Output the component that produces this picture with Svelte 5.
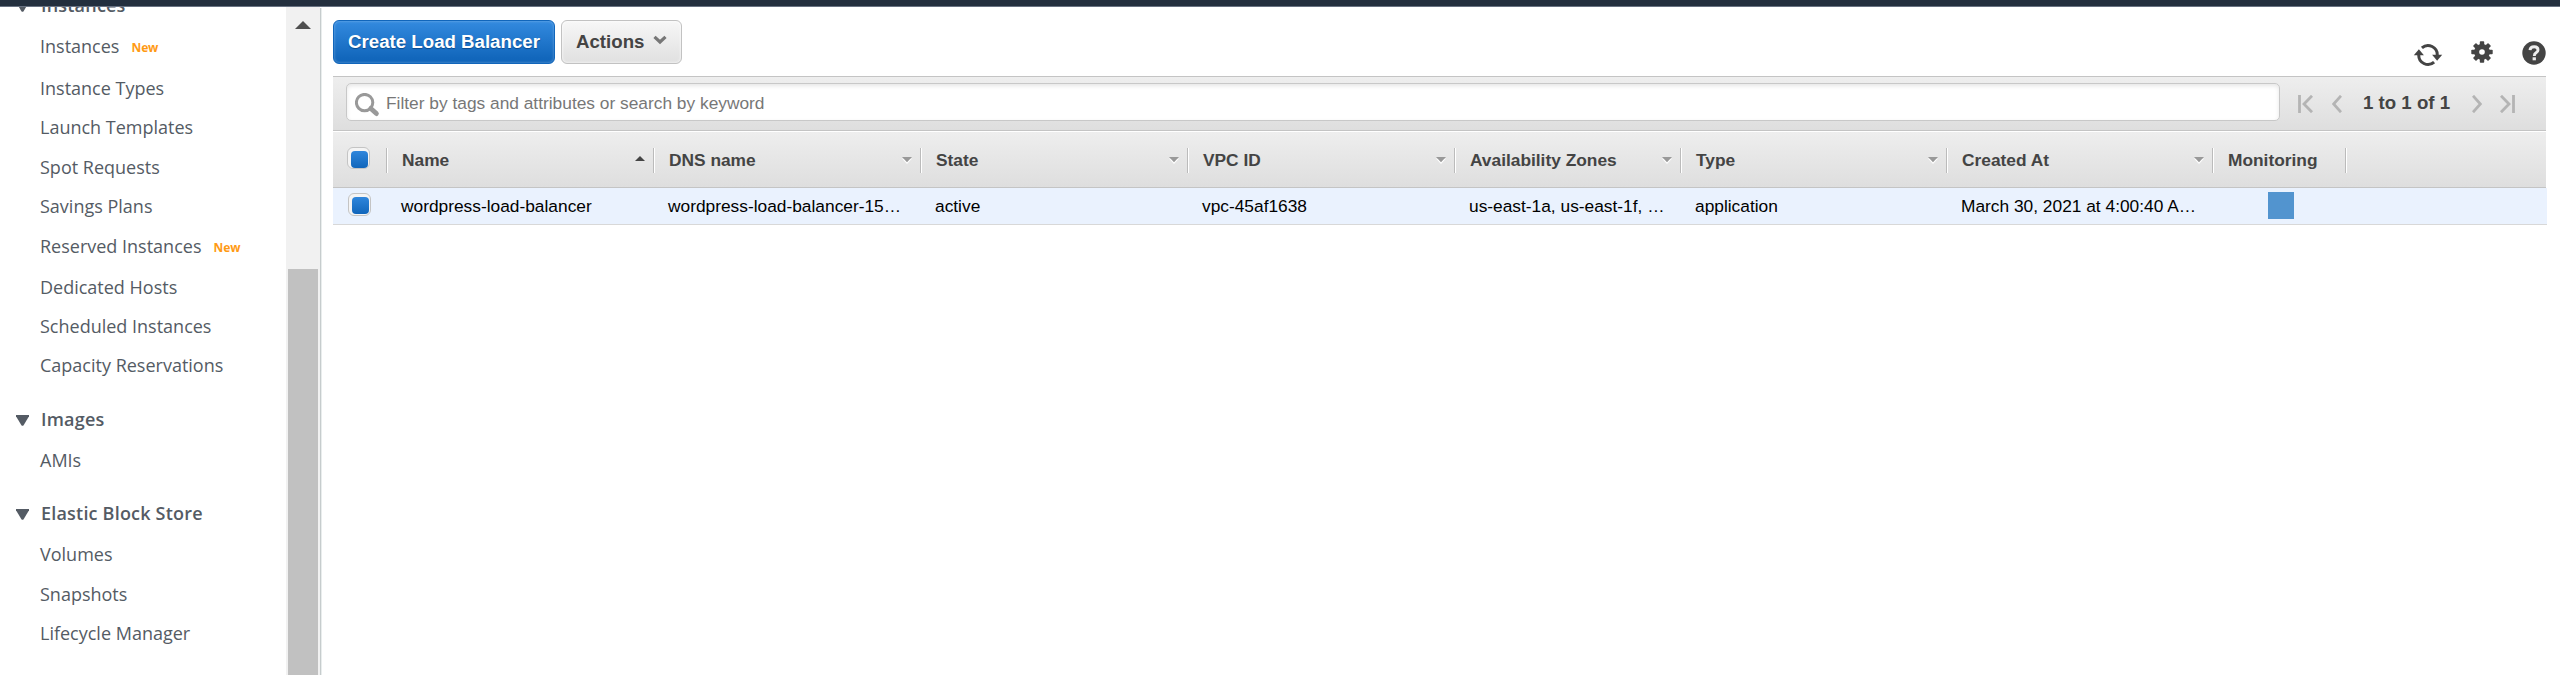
<script>
  const sections = [
    {
      title: 'Instances',
      items: [
        { label: 'Instances', isNew: true },
        { label: 'Instance Types' },
        { label: 'Launch Templates' },
        { label: 'Spot Requests' },
        { label: 'Savings Plans' },
        { label: 'Reserved Instances', isNew: true },
        { label: 'Dedicated Hosts' },
        { label: 'Scheduled Instances' },
        { label: 'Capacity Reservations' }
      ]
    },
    { title: 'Images', items: [{ label: 'AMIs' }] },
    {
      title: 'Elastic Block Store',
      items: [{ label: 'Volumes' }, { label: 'Snapshots' }, { label: 'Lifecycle Manager' }]
    }
  ];

  const columns = [
    { title: 'Name', value: 'wordpress-load-balancer', sort: 'asc' },
    { title: 'DNS name', value: 'wordpress-load-balancer-15…', sort: 'none' },
    { title: 'State', value: 'active', sort: 'none' },
    { title: 'VPC ID', value: 'vpc-45af1638', sort: 'none' },
    { title: 'Availability Zones', value: 'us-east-1a, us-east-1f, …', sort: 'none' },
    { title: 'Type', value: 'application', sort: 'none' },
    { title: 'Created At', value: 'March 30, 2021 at 4:00:40 A…', sort: 'none' }
  ];
</script>

<div class="app">
  <header class="topbar"></header>
  <div class="body">
    <nav class="sidebar">
      {#each sections as section}
        <section>
          <h2>
            <svg width="13" height="11" viewBox="0 0 13 11"><path d="M0 0h13v1.2L7.6 10.2Q6.5 11.4 5.4 10.2L0 1.2z" fill="#545b64" /></svg>
            <span>{section.title}</span>
          </h2>
          <ul>
            {#each section.items as item}
              <li class:with-badge={item.isNew}>
                <span>{item.label}</span>{#if item.isNew}<em>New</em>{/if}
              </li>
            {/each}
          </ul>
        </section>
      {/each}
    </nav>

    <div class="scrollbar">
      <svg width="16" height="8" viewBox="0 0 16 8"><path d="M8 0l8 8H0z" fill="#505050" /></svg>
      <div class="thumb"></div>
    </div>
    <div class="divider"></div>

    <main>
      <div class="toolbar">
        <button class="primary">Create Load Balancer</button>
        <button class="secondary">
          Actions
          <svg width="14" height="10" viewBox="0 0 14 10"><path d="M1.5 1.8L7 7l5.5-5.2" fill="none" stroke="#777" stroke-width="3.2" /></svg>
        </button>
        <div class="tools">
          <svg class="refresh" width="30" height="24" viewBox="0 0 30 24">
            <g fill="none" stroke="#444" stroke-width="3">
              <path d="M8.9 4.9A9.2 9.2 0 0 1 24.2 12.5" />
              <path d="M21.1 19.1A9.2 9.2 0 0 1 5.8 11.5" />
            </g>
            <path d="M0.8 12.2L5.9 6.2l5 6z" fill="#444" />
            <path d="M19.1 11.8h10.1l-5.1 6z" fill="#444" />
          </svg>
          <svg class="gear" width="22" height="22" viewBox="0 0 22 22">
            <g fill="#444">
              <rect x="8.8" y="0.3" width="4.4" height="21.4" rx="0.8" />
              <rect x="8.8" y="0.3" width="4.4" height="21.4" rx="0.8" transform="rotate(45 11 11)" />
              <rect x="8.8" y="0.3" width="4.4" height="21.4" rx="0.8" transform="rotate(90 11 11)" />
              <rect x="8.8" y="0.3" width="4.4" height="21.4" rx="0.8" transform="rotate(135 11 11)" />
              <circle cx="11" cy="11" r="7.9" />
            </g>
            <circle cx="11" cy="11" r="2.8" fill="#fff" />
          </svg>
          <svg class="help" width="24" height="24" viewBox="0 0 24 24">
            <circle cx="12" cy="12" r="11.7" fill="#444" />
            <path d="M8 9.2Q8.2 5.8 12.2 5.8Q16 5.8 16 8.9Q16 10.6 14.1 11.8Q12.3 12.9 12.3 15" fill="none" stroke="#eee" stroke-width="2.9" />
            <rect x="10.6" y="16.3" width="3.3" height="3" fill="#eee" />
          </svg>
        </div>
      </div>

      <div class="filterbar">
        <div class="search">
          <svg width="25" height="24" viewBox="0 0 25 24">
            <circle cx="9.6" cy="9.6" r="8.2" fill="none" stroke="#999" stroke-width="3" />
            <path d="M15.8 15.4l5.6 5.2" stroke="#999" stroke-width="4.8" stroke-linecap="round" />
          </svg>
          <span>Filter by tags and attributes or search by keyword</span>
        </div>
        <div class="pager">
          <svg width="15" height="18" viewBox="0 0 15 18"><path d="M1.5 0v18M14 .8L6 9l8 8.2" /></svg>
          <svg class="prev" width="10" height="18" viewBox="0 0 10 18"><path d="M9 .8L1.6 9 9 17.2" /></svg>
          <strong>1 to 1 of 1</strong>
          <svg class="next" width="10" height="18" viewBox="0 0 10 18"><path d="M1 .8L8.4 9 1 17.2" /></svg>
          <svg width="15" height="18" viewBox="0 0 15 18"><path d="M13.5 0v18M1 .8L9 9l-8 8.2" /></svg>
        </div>
      </div>

      <div class="grid head">
        <div class="check"><i></i></div>
        {#each columns as col}
          <div class="cell">
            <span>{col.title}</span>
            {#if col.sort === 'asc'}
              <svg class="asc" width="10" height="5" viewBox="0 0 10 5"><path d="M5 0l5 5H0z" fill="#444" /></svg>
            {:else}
              <svg width="10" height="7" viewBox="0 0 10 7"><path d="M0 1.5h10L5 7z" fill="#fff" /><path d="M0 0h10L5 5.3z" fill="#999" /></svg>
            {/if}
          </div>
        {/each}
        <div class="cell"><span>Monitoring</span></div>
        <div class="cell"></div>
      </div>

      <div class="grid row">
        <div class="check"><i></i></div>
        {#each columns as col}
          <div class="cell"><span>{col.value}</span></div>
        {/each}
        <div class="cell monitor"><b></b></div>
        <div class="cell"></div>
      </div>
    </main>
  </div>
</div>

<style>
  :global(body) { background: #fff; }
  * { box-sizing: border-box; }
  svg { display: block; flex: none; }

  .app {
    display: flex;
    flex-direction: column;
    width: 2560px;
    height: 675px;
    overflow: hidden;
    font-family: "Liberation Sans", Arial, sans-serif;
    color: #444;
  }
  .topbar { height: 7px; flex: none; background: #232f3e; border-bottom: 1px solid #687282; }
  .body { display: flex; flex: 1; min-height: 0; }

  .sidebar {
    width: 286px;
    flex: none;
    overflow: hidden;
    font: 18px/24px "Open Sans", sans-serif;
    color: #545b64;
  }
  section { margin-bottom: 14px; }
  section:first-child { margin-top: -14px; }
  h2 {
    display: flex;
    align-items: flex-start;
    height: 41px;
    margin: 0;
    padding-left: 16px;
    font: 600 18px/24px "Open Sans", sans-serif;
    letter-spacing: 0.2px;
  }
  h2 svg { margin: 8px 12px 0 0; }
  ul { list-style: none; margin: 0; padding: 0; }
  li { display: flex; height: 39.4px; padding-left: 40px; white-space: nowrap; }
  li.with-badge { height: 41px; }
  li.with-badge:first-child { height: 42px; }
  em {
    margin: 2px 0 0 12px;
    font: 700 12px/24px "Noto Sans", sans-serif;
    color: #ff9a14;
  }

  .scrollbar {
    display: flex;
    flex-direction: column;
    width: 34px;
    flex: none;
    padding: 14px 2px 0 2px;
    background: #f1f1f1;
  }
  .scrollbar svg { margin-left: 7px; }
  .thumb { flex: 1; width: 30px; margin-top: 240px; background: #c1c1c1; }
  .divider { width: 2px; flex: none; margin-top: 1px; background: linear-gradient(90deg, #c6cccd 50%, #e9eded 50%); }

  main { width: 2225px; padding: 13px 0 0 11px; }
  .toolbar { display: flex; height: 56px; width: 2213px; }
  button {
    height: 44px;
    margin: 0;
    padding: 0 0 1px;
    border-radius: 6px;
    font: bold 18.67px/22px "Liberation Sans", Arial, sans-serif;
  }
  .primary {
    width: 222px;
    margin-right: 6px;
    color: #fff;
    border: 1px solid #1166bb;
    background: linear-gradient(#338adf, #1166bb 90%);
    box-shadow: inset 0 0 3px rgba(255, 255, 255, 0.35);
    text-shadow: 0 1px 1px #0a4a8c;
  }
  .secondary {
    display: flex;
    align-items: center;
    width: 121px;
    padding-left: 14px;
    color: #444;
    border: 1px solid #c2c2c2;
    background: linear-gradient(#f7f7f7, #e0e0e0);
    box-shadow: inset 0 0 3px #fff;
  }
  .secondary svg { margin: -3px 0 0 9px; }
  .tools { display: flex; align-items: flex-start; margin-left: auto; }
  .refresh { margin: 23px 28px 0 0; }
  .gear { margin: 21px 29px 0 0; }
  .help { margin-top: 21px; }

  .filterbar {
    display: flex;
    align-items: flex-start;
    width: 2213px;
    height: 55px;
    padding: 6px 0 0 13px;
    border-top: 1px solid #c4c4c4;
    border-bottom: 1px solid #c4c4c4;
    background: linear-gradient(#eeeeee, #dedede);
  }
  .search {
    display: flex;
    width: 1934px;
    height: 38px;
    padding-left: 8px;
    border: 1px solid #c8c8c8;
    border-radius: 5px;
    background: #fff;
    box-shadow: inset 0 2px 4px rgba(0, 0, 0, 0.1);
  }
  .search svg { margin-top: 9px; }
  .search span { margin-left: 6px; font-size: 17.33px; line-height: 38px; color: #777; }
  .pager { display: flex; height: 38px; align-items: center; margin-left: 18px; }
  .pager svg { fill: none; stroke: #b4b4b4; stroke-width: 2.8; margin-top: 4px; }
  .pager .prev { margin-left: 19px; }
  .pager strong { width: 87px; margin: 2px 22px 0 21px; font-size: 18.67px; line-height: 38px; white-space: nowrap; }
  .pager .next { margin-right: 18px; }

  .grid { display: grid; grid-template-columns: 53px 267px 267px 267px 267px 226px 266px 266px 133px 1fr; font-size: 17.33px; }
  .head {
    width: 2213px;
    height: 57px;
    border-top: 1px solid #fff;
    border-bottom: 1px solid #c4c4c4;
    background: linear-gradient(#eeeeee, #dedede);
    font-weight: bold;
  }
  .head .cell {
    display: flex;
    height: 25px;
    margin-top: 16px;
    padding: 0 8px 0 15px;
    align-items: center;
    justify-content: space-between;
    border-left: 1px solid #bbb;
    box-shadow: inset 1px 0 #fff;
    white-space: nowrap;
  }
  .head .cell span { line-height: 25px; }
  .head .asc { margin-top: -4px; }
  .row {
    width: 2214px;
    height: 37px;
    border-bottom: 1px solid #d8d8d8;
    background: #eaf2fe;
    color: #000;
  }
  .row .cell { padding-left: 15px; line-height: 36px; white-space: nowrap; }
  .row .monitor { padding: 4px 0 0 56px; }
  .monitor b { display: block; width: 26px; height: 27px; background: #5294cf; }

  .check i {
    display: block;
    width: 23px;
    height: 22px;
    margin: 15px 0 0 14px;
    padding: 3px 1px 0 3px;
    border: 1px solid #c4c4c4;
    border-radius: 6px;
    background: #f4f4f4;
  }
  .check i::before {
    content: "";
    display: block;
    width: 17px;
    height: 17px;
    border-radius: 4px;
    background: linear-gradient(#2f86dc, #1166bb);
  }
  .row .check i { margin: 5px 0 0 15px; height: 23px; }
</style>
